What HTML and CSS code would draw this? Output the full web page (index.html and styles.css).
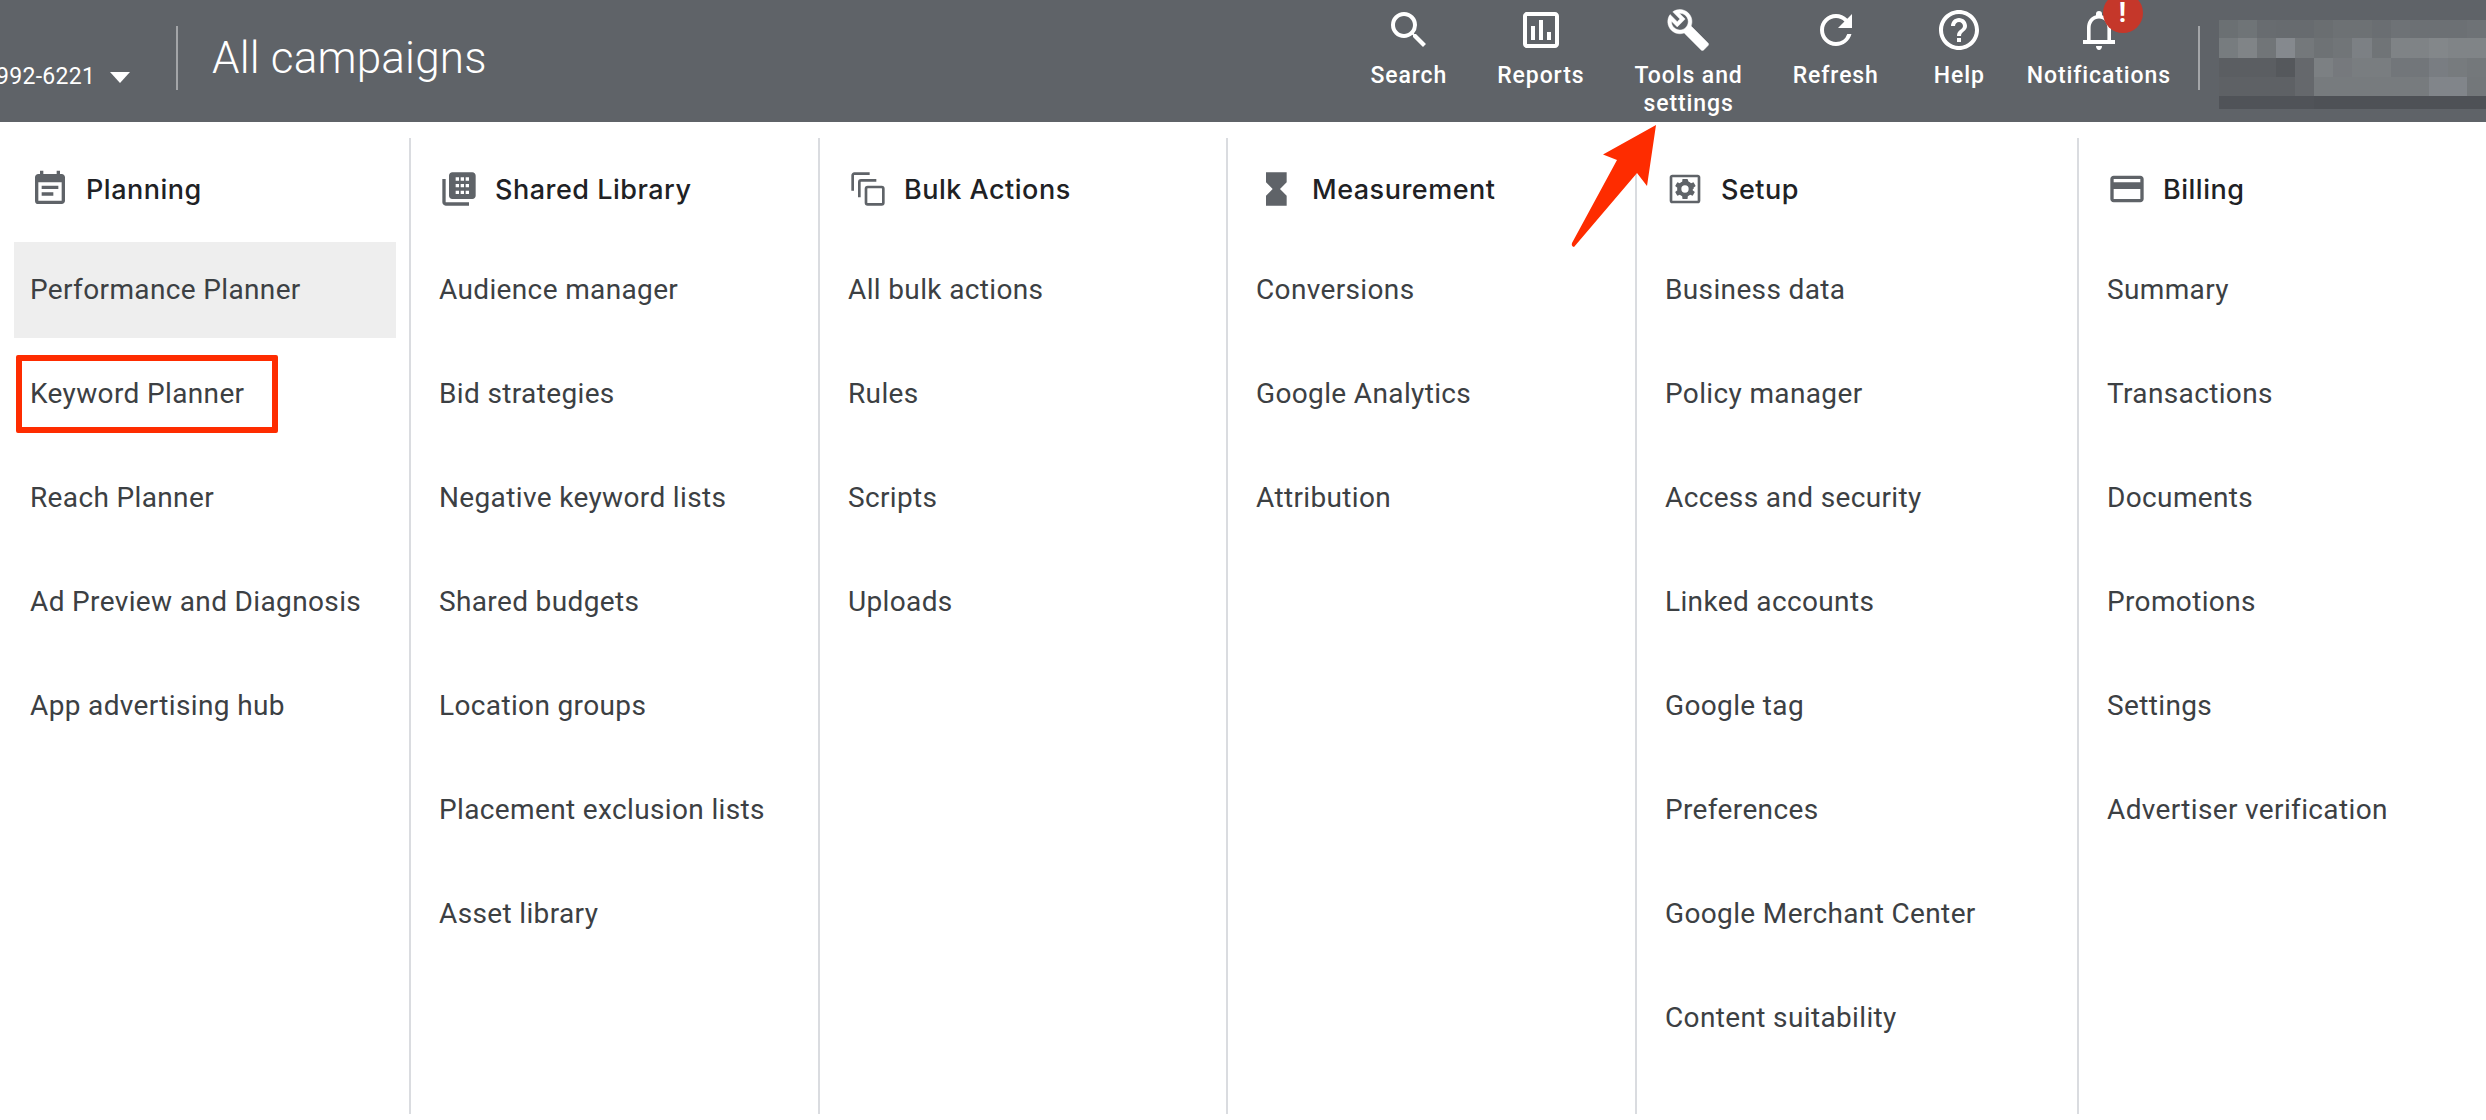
FILE: index.html
```html
<!DOCTYPE html>
<html lang="en">
<head>
<meta charset="utf-8">
<title>All campaigns</title>
<link rel="stylesheet" href="styles.css">
</head>
<body>
<header class="topbar">
  <div class="account"><span class="account-id">992-6221</span><span class="caret"></span></div>
  <div class="vrule"></div>
  <div class="page-title">All campaigns</div>
  <nav class="actions">
    <a class="action act-search"><svg class="action-icon" viewBox="0 0 24 24"><path d="M15.5 14h-.79l-.28-.27A6.471 6.471 0 0 0 16 9.5 6.5 6.5 0 1 0 9.5 16c1.61 0 3.09-.59 4.23-1.57l.27.28v.79l5 4.99L20.49 19l-4.99-5zm-6 0C7.01 14 5 11.99 5 9.5S7.01 5 9.5 5 14 7.01 14 9.5 11.99 14 9.5 14z"/></svg><span>Search</span></a>
    <a class="action act-reports"><svg class="action-icon" viewBox="0 0 24 24"><path d="M19 3H5c-1.1 0-2 .9-2 2v14c0 1.1.9 2 2 2h14c1.1 0 2-.9 2-2V5c0-1.1-.9-2-2-2zm0 16H5V5h14v14z"/><path d="M7 10h2v7H7zm4-3h2v10h-2zm4 6h2v4h-2z"/></svg><span>Reports</span></a>
    <a class="action act-tools"><svg class="action-icon wrench" viewBox="-0.5 -0.9 25.8 25.8"><path d="M22.61 18.99l-9.08-9.08c.93-2.34.45-5.1-1.44-7C9.79.61 6.21.4 3.66 2.25L7.5 6.1 6.08 7.51 2.25 3.69C.39 6.23.61 9.81 2.91 12.1c1.86 1.86 4.57 2.35 6.89 1.48l9.11 9.11c.39.39 1.02.39 1.41 0l2.3-2.3c.4-.38.4-1.01 0-1.4zM10.15 11.13c-.61.45-1.29.72-2 .82-1.36.2-2.79-.21-3.83-1.25C3.37 9.76 2.93 8.5 3 7.26l3.09 3.09 4.24-4.24-3.09-3.09c1.24-.07 2.49.37 3.44 1.31 1.08 1.08 1.49 2.57 1.24 3.96-.12.71-.42 1.37-.88 1.96z"/></svg><span>Tools and<br>settings</span></a>
    <a class="action act-refresh"><svg class="action-icon" viewBox="0 0 24 24"><path d="M17.65 6.35A7.958 7.958 0 0 0 12 4c-4.42 0-7.99 3.58-7.99 8s3.57 8 7.99 8c3.73 0 6.84-2.55 7.73-6h-2.08A5.99 5.99 0 0 1 12 18c-3.31 0-6-2.69-6-6s2.69-6 6-6c1.66 0 3.14.69 4.22 1.78L13 11h7V4l-2.35 2.35z"/></svg><span>Refresh</span></a>
    <a class="action act-help"><svg class="action-icon" viewBox="0 0 24 24"><path d="M11 18h2v-2h-2v2zm1-16C6.48 2 2 6.48 2 12s4.48 10 10 10 10-4.48 10-10S17.52 2 12 2zm0 18c-4.41 0-8-3.59-8-8s3.59-8 8-8 8 3.59 8 8-3.59 8-8 8zm0-14c-2.21 0-4 1.79-4 4h2c0-1.1.9-2 2-2s2 .9 2 2c0 2-3 1.75-3 5h2c0-2.25 3-2.5 3-5 0-2.21-1.79-4-4-4z"/></svg><span>Help</span></a>
    <a class="action act-notif"><svg class="action-icon" viewBox="0 0 24 24"><path fill-rule="evenodd" d="M4 19v-2h2v-6c0-3.070 1.640-5.640 4.500-6.320V4a1.500 1.500 0 0 1 3 0v.68C16.370 5.360 18 7.930 18 11v6h2v2zM7.800 17h8.400v-6c0-2.600-1.600-4.700-4.200-4.700S7.800 8.400 7.800 11z"/><path d="M10.500 20h3c0 1.100-.6 2-1.500 2s-1.500-.9-1.500-2z"/></svg><span>Notifications</span><b class="badge">!</b></a>
  </nav>
  <div class="vrule vrule-right"></div>
  <svg class="redacted" viewBox="2219 20 267 89" shape-rendering="crispEdges" aria-hidden="true">
    <g>
      <rect x="2219" y="20" width="19" height="18" fill="#6b7073"/><rect x="2238" y="20" width="19" height="18" fill="#6f7477"/><rect x="2257" y="20" width="19" height="18" fill="#686c70"/><rect x="2276" y="20" width="38" height="18" fill="#676b6f"/><rect x="2314" y="20" width="19" height="18" fill="#6a6e71"/><rect x="2333" y="20" width="39" height="18" fill="#6d7174"/><rect x="2372" y="20" width="19" height="18" fill="#6a6e72"/><rect x="2391" y="20" width="19" height="18" fill="#6e7276"/><rect x="2410" y="20" width="57" height="18" fill="#6c7074"/><rect x="2467" y="20" width="19" height="18" fill="#6e7276"/>
      <rect x="2219" y="38" width="19" height="20" fill="#777c7f"/><rect x="2238" y="38" width="19" height="20" fill="#808487"/><rect x="2257" y="38" width="19" height="20" fill="#717578"/><rect x="2276" y="38" width="19" height="20" fill="#85898e"/><rect x="2295" y="38" width="19" height="20" fill="#74787b"/><rect x="2314" y="38" width="19" height="20" fill="#6e7275"/><rect x="2333" y="38" width="19" height="20" fill="#717578"/><rect x="2352" y="38" width="20" height="20" fill="#7c8084"/><rect x="2372" y="38" width="19" height="20" fill="#707477"/><rect x="2391" y="38" width="38" height="20" fill="#7f8386"/><rect x="2429" y="38" width="19" height="20" fill="#83878a"/><rect x="2448" y="38" width="38" height="20" fill="#808487"/>
      <rect x="2219" y="58" width="57" height="19" fill="#5b5e62"/><rect x="2276" y="58" width="19" height="19" fill="#55585c"/><rect x="2295" y="58" width="19" height="19" fill="#65686c"/><rect x="2314" y="58" width="19" height="19" fill="#7c8083"/><rect x="2333" y="58" width="19" height="19" fill="#76797d"/><rect x="2352" y="58" width="39" height="19" fill="#797d80"/><rect x="2391" y="58" width="38" height="19" fill="#72767a"/><rect x="2429" y="58" width="19" height="19" fill="#797d82"/><rect x="2448" y="58" width="19" height="19" fill="#777b7e"/><rect x="2467" y="58" width="19" height="19" fill="#74787b"/>
      <rect x="2219" y="77" width="76" height="19" fill="#5e6165"/><rect x="2295" y="77" width="19" height="19" fill="#65686c"/><rect x="2314" y="77" width="115" height="19" fill="#777b7e"/><rect x="2429" y="77" width="38" height="19" fill="#81858a"/><rect x="2467" y="77" width="19" height="19" fill="#73777a"/>
      <rect x="2219" y="96" width="95" height="13" fill="#505358"/><rect x="2314" y="96" width="172" height="13" fill="#4e5156"/>
    </g>
  </svg>
</header>

<main class="menu">
  <section class="col">
    <h2 class="col-head"><svg class="col-icon" viewBox="0 0 24 24"><path d="M17 10H7v2h10v-2zm2-7h-1V1h-2v2H8V1H6v2H5c-1.11 0-1.99.9-1.99 2L3 19a2 2 0 0 0 2 2h14c1.1 0 2-.9 2-2V5c0-1.1-.9-2-2-2zm0 16H5V8h14v11zm-5-5H7v2h7v-2z"/></svg>Planning</h2>
    <a class="item item-active">Performance Planner</a>
    <a class="item">Keyword Planner</a>
    <a class="item">Reach Planner</a>
    <a class="item">Ad Preview and Diagnosis</a>
    <a class="item">App advertising hub</a>
  </section>
  <section class="col">
    <h2 class="col-head"><svg class="col-icon" viewBox="0 0 24 24"><path d="M4 6H2v14c0 1.1.9 2 2 2h14v-2H4V6zm16-4H8c-1.1 0-2 .9-2 2v12c0 1.1.9 2 2 2h12c1.1 0 2-.9 2-2V4c0-1.1-.9-2-2-2z"/><path class="dots" d="M10 5h2v2h-2zm3 0h2v2h-2zm3 0h2v2h-2zm-6 4h2v2h-2zm3 0h2v2h-2zm3 0h2v2h-2zm-6 4h2v2h-2zm3 0h2v2h-2zm3 0h2v2h-2z"/></svg>Shared Library</h2>
    <a class="item">Audience manager</a>
    <a class="item">Bid strategies</a>
    <a class="item">Negative keyword lists</a>
    <a class="item">Shared budgets</a>
    <a class="item">Location groups</a>
    <a class="item">Placement exclusion lists</a>
    <a class="item">Asset library</a>
  </section>
  <section class="col">
    <h2 class="col-head"><svg class="col-icon line-icon" viewBox="0 0 24 24"><path d="M13 2.800H3.800a1 1 0 0 0-1 1V13"/><path d="M17 6.800H7.800a1 1 0 0 0-1 1V17"/><rect x="10.800" y="10.800" width="10.400" height="10.400" rx="1"/></svg>Bulk Actions</h2>
    <a class="item">All bulk actions</a>
    <a class="item">Rules</a>
    <a class="item">Scripts</a>
    <a class="item">Uploads</a>
  </section>
  <section class="col">
    <h2 class="col-head"><svg class="col-icon" viewBox="0 0 24 24"><path d="M6 2v6l4 4-4 4v6h12.400v-6l-4-4 4-4V2z"/></svg>Measurement</h2>
    <a class="item">Conversions</a>
    <a class="item">Google Analytics</a>
    <a class="item">Attribution</a>
  </section>
  <section class="col">
    <h2 class="col-head"><svg class="col-icon" viewBox="0 0 24 24"><path d="M19.600 3.400H4.400c-.9 0-1.600.7-1.600 1.600v14c0 .9.7 1.600 1.600 1.600h15.200c.9 0 1.600-.7 1.600-1.600V5c0-.9-.7-1.600-1.600-1.600zm0 15.600H4.400V5h15.200v14z"/><path fill-rule="evenodd" d="M17.200 12c0-.3 0-.6-.1-.8l1.300-1-1.300-2.300-1.500.6c-.4-.3-.9-.6-1.400-.8L13.500 6h-3l-.2 1.700c-.5.2-1 .5-1.400.8l-1.500-.6-1.300 2.300 1.300 1c-.1.2-.1.5-.1.8s0 .6.1.8l-1.300 1 1.300 2.300 1.500-.6c.4.3.9.6 1.400.8l.2 1.700h3l.2-1.700c.5-.2 1-.5 1.400-.8l1.500.6 1.300-2.300-1.300-1c.1-.2.1-.5.1-.8zM12 14.200a2.200 2.200 0 1 1 0-4.400 2.200 2.200 0 0 1 0 4.400z"/></svg>Setup</h2>
    <a class="item">Business data</a>
    <a class="item">Policy manager</a>
    <a class="item">Access and security</a>
    <a class="item">Linked accounts</a>
    <a class="item">Google tag</a>
    <a class="item">Preferences</a>
    <a class="item">Google Merchant Center</a>
    <a class="item">Content suitability</a>
  </section>
  <section class="col">
    <h2 class="col-head"><svg class="col-icon" viewBox="0 0 24 24"><path d="M20 4H4c-1.110 0-2 .89-2 2v12c0 1.110.89 2 2 2h16c1.110 0 2-.89 2-2V6c0-1.110-.89-2-2-2zm0 14H4v-6h16v6zm0-10H4V6h16v2z"/></svg>Billing</h2>
    <a class="item">Summary</a>
    <a class="item">Transactions</a>
    <a class="item">Documents</a>
    <a class="item">Promotions</a>
    <a class="item">Settings</a>
    <a class="item">Advertiser verification</a>
  </section>
</main>

<div class="callout-box"></div>
<svg class="callout-arrow" viewBox="1560 120 100 132" aria-hidden="true"><path d="M1656 125 1603 154.500 1617 160 1572 243Q1571 246 1574 247L1637 173 1647 186Z"/></svg>
</body>
</html>
```

FILE: styles.css
```css
* { box-sizing: border-box; }

html, body {
  margin: 0;
  height: 100%;
  overflow: hidden;
  background: #fff;
  font-family: Roboto, "Liberation Sans", sans-serif;
}

body { position: relative; }

.topbar {
  display: flex;
  align-items: flex-start;
  height: 122px;
  background: #5f6368;
  color: #fff;
  overflow: hidden;
}

.account {
  display: flex;
  align-items: center;
  flex: none;
  width: 180px;
  margin-left: -4px;
  margin-top: 62px;
  font-size: 23px;
  line-height: 30px;
  letter-spacing: .3px;
}

.caret {
  width: 0;
  height: 0;
  margin-left: 15px;
  border-left: 10px solid transparent;
  border-right: 10px solid transparent;
  border-top: 11px solid #fff;
}

.vrule {
  flex: none;
  width: 2px;
  height: 64px;
  margin-top: 26px;
  background: #a3a5a8;
}

.page-title {
  flex: none;
  margin-left: 34px;
  margin-top: 30px;
  font-size: 44px;
  line-height: 56px;
  font-weight: 300;
  letter-spacing: .2px;
}

.actions {
  display: flex;
  margin-left: auto;
  gap: 50px;
}

.action {
  position: relative;
  display: flex;
  flex-direction: column;
  align-items: center;
  padding-top: 6px;
  font-size: 23px;
  font-weight: 500;
  line-height: 28px;
  letter-spacing: .9px;
  text-align: center;
}

.act-help { margin-left: 5px; }
.act-notif { margin-left: -8px; }

.action-icon {
  display: block;
  width: 48px;
  height: 48px;
  margin-bottom: 8px;
  fill: #fff;
}

.wrench {
  stroke: #fff;
  stroke-width: .25;
}

.badge {
  position: absolute;
  left: 76px;
  top: -7px;
  width: 40px;
  height: 40px;
  border-radius: 50%;
  background: #c5372a;
  font-size: 27px;
  font-weight: 700;
  line-height: 41px;
}

.vrule-right { margin-left: 27px; }

.redacted {
  flex: none;
  display: block;
  width: 267px;
  height: 89px;
  margin-left: 19px;
  margin-top: 20px;
}

.menu {
  display: grid;
  grid-template-columns: 409px 409px 408px 409px 442px 1fr;
  height: 976px;
  margin-top: 16px;
}

.col {
  display: flex;
  flex-direction: column;
  padding: 0 13px 0 14px;
}

.col + .col {
  border-left: 2px solid #dadce0;
  padding-left: 12px;
}

.col-head {
  display: flex;
  align-items: center;
  gap: 16px;
  height: 104px;
  margin: 0 0 0 16px;
  padding-bottom: 2px;
  font-family: Inter, Roboto, sans-serif;
  font-size: 27px;
  font-weight: 500;
  letter-spacing: .5px;
  color: #202124;
}

.col-icon {
  flex: none;
  width: 40px;
  height: 40px;
  fill: #5f6368;
}

.line-icon {
  fill: none;
  stroke: #5f6368;
  stroke-width: 1.6;
}

.dots { fill: #fff; }

.item {
  display: flex;
  align-items: center;
  flex: none;
  height: 96px;
  margin-bottom: 8px;
  padding: 0 16px 2px;
  font-size: 28px;
  letter-spacing: .36px;
  color: #3c4043;
}

.item-active { background: #eeeeee; }

.callout-box {
  position: absolute;
  left: 16px;
  top: 355px;
  width: 262px;
  height: 78px;
  border: 6px solid #fe2c00;
  border-radius: 2px;
}

.callout-arrow {
  position: absolute;
  left: 1560px;
  top: 120px;
  width: 100px;
  height: 132px;
  fill: #fe2c00;
}
```
